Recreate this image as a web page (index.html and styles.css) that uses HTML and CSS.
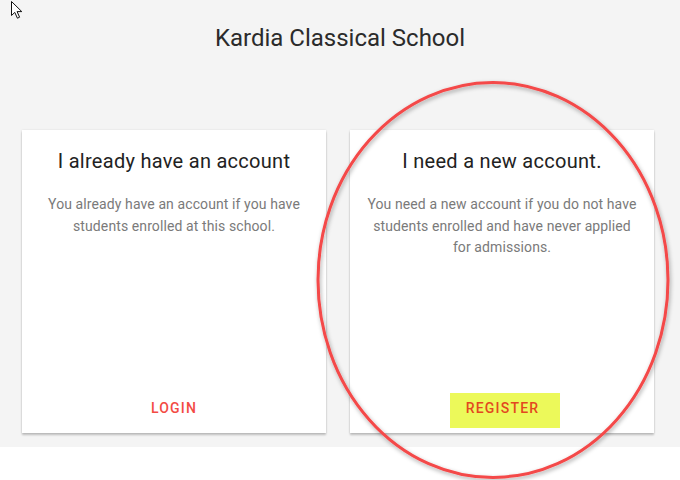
FILE: index.html
```html
<!DOCTYPE html>
<html lang="en">
<head>
<meta charset="utf-8">
<title>Kardia Classical School</title>
<link rel="stylesheet" href="styles.css">
</head>
<body>
<div class="page">
  <h1 class="school">Kardia Classical School</h1>
  <div class="cards">
    <div class="card">
      <h2 class="card-title">I already have an account</h2>
      <p class="card-text">You already have an account if you have students enrolled at this school.</p>
      <div class="card-actions">
        <span class="btn">LOGIN</span>
      </div>
    </div>
    <div class="card">
      <h2 class="card-title">I need a new account.</h2>
      <p class="card-text">You need a new account if you do not have students enrolled and have never applied for admissions.</p>
      <div class="card-actions">
        <span class="btn btn-highlight">REGISTER</span>
      </div>
    </div>
  </div>
</div>
<svg class="annotation" width="680" height="480" viewBox="0 0 680 480">
  <defs>
    <filter id="sh" x="-10%" y="-10%" width="120%" height="120%">
      <feDropShadow dx="1" dy="2" stdDeviation="2" flood-color="#000" flood-opacity="0.35"/>
    </filter>
  </defs>
  <ellipse cx="493" cy="280" rx="175" ry="197.5" fill="none" stroke="#f44848" stroke-width="3" filter="url(#sh)"/>
</svg>
<svg class="cursor" width="14" height="20" viewBox="0 0 14 20">
  <path d="M1.5 1.5 L1.5 15.5 L4.8 12.4 L7.4 18.2 L9.6 17.2 L7.1 11.6 L11.8 11.6 Z" fill="#fff" stroke="#111" stroke-width="1" stroke-linejoin="miter"/>
</svg>
</body>
</html>
```
FILE: styles.css
```css
html, body {
  margin: 0;
  padding: 0;
  background: #ffffff;
}
body {
  font-family: Roboto, "Noto Sans", Arial, sans-serif;
  width: 680px;
  height: 480px;
  position: relative;
  overflow: hidden;
}
.page {
  background: #f4f4f4;
  height: 447px;
  box-sizing: border-box;
  padding-top: 22px;
}
.school {
  margin: 0;
  text-align: center;
  font-size: 24px;
  line-height: 32px;
  font-weight: 400;
  color: #2b2b2b;
}
.cards {
  display: flex;
  gap: 24px;
  padding-left: 22px;
  margin-top: 76px;
}
.card {
  width: 304px;
  height: 303px;
  background: #fff;
  box-shadow: 0 2px 2px rgba(0,0,0,0.22), 0 0 2px rgba(0,0,0,0.10);
  display: flex;
  flex-direction: column;
  align-items: center;
  box-sizing: border-box;
  padding: 17px 14px 5px;
}
.card-title {
  margin: 0;
  font-size: 20px;
  line-height: 28px;
  font-weight: 400;
  letter-spacing: 0.28px;
  color: #222;
  text-align: center;
}
.card-text {
  margin: 19px 0 0;
  font-size: 14px;
  line-height: 21.5px;
  letter-spacing: 0.1px;
  color: #7a7a7a;
  text-align: center;
}
.card-actions {
  margin-top: auto;
  display: flex;
  justify-content: center;
}
.btn {
  display: block;
  box-sizing: border-box;
  height: 35px;
  line-height: 30px;
  padding: 0 16px 5px;
  font-size: 14px;
  font-weight: 500;
  letter-spacing: 1.2px;
  color: #f34b44;
}
.btn-highlight {
  background: #ecf95a;
  color: #e3481f;
  padding: 0 21px 5px 16px;
  margin-left: 6px;
}
.annotation {
  position: absolute;
  left: 0;
  top: 0;
  pointer-events: none;
}
.cursor {
  position: absolute;
  left: 10px;
  top: 0;
}
```
